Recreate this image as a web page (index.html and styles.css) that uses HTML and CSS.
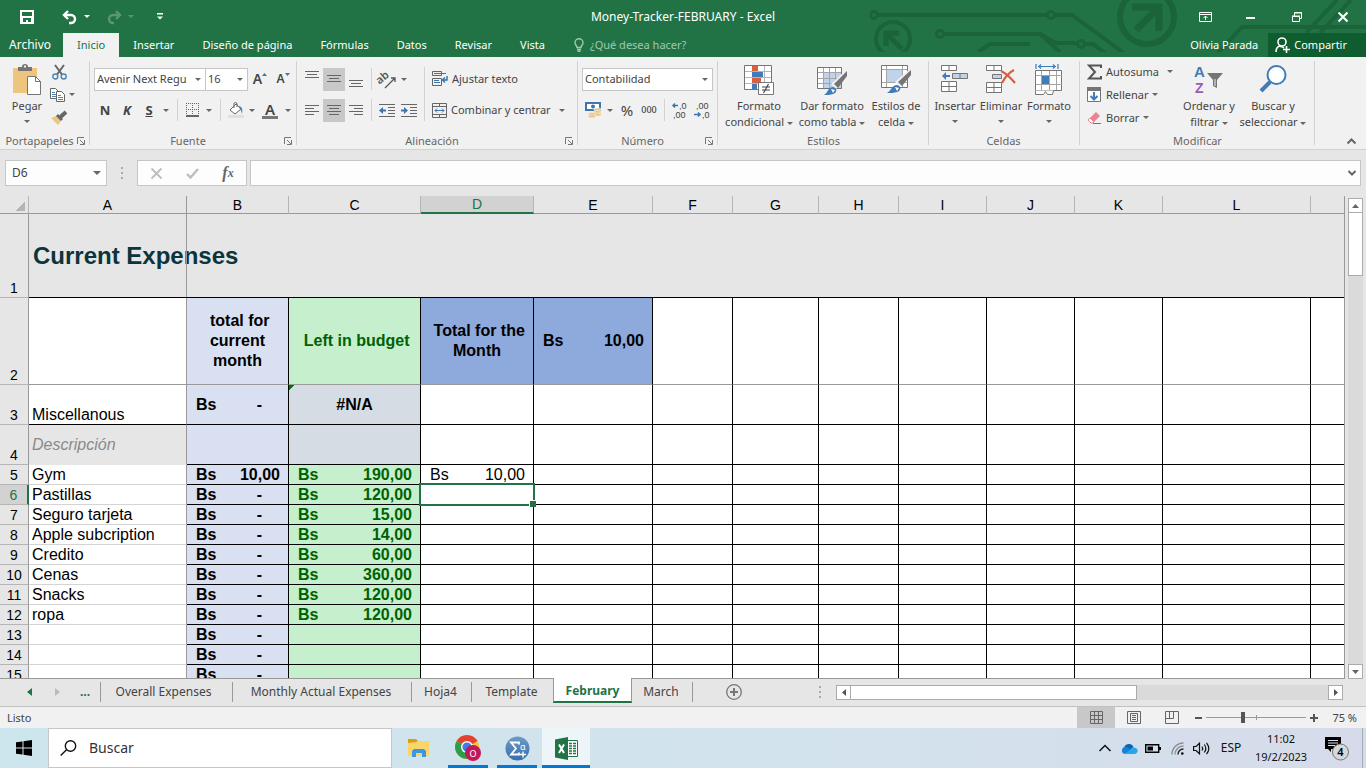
FILE: index.html
```html
<!DOCTYPE html>
<html lang="es">
<head>
<meta charset="utf-8">
<title>Money-Tracker-FEBRUARY - Excel</title>
<link rel="stylesheet" href="styles.css">
</head>
<body>
<header class="top">
  <svg class="circuit" width="496" height="52" viewBox="0 0 496 52" fill="none" stroke="#1b6339" stroke-width="4">
    <circle cx="4" cy="15" r="3.5" stroke-width="3"/><path d="M8 15H154"/>
    <circle cx="23" cy="39" r="17"/><path d="M16 46V33h13M17 34l15 15" stroke-width="5"/>
    <circle cx="70" cy="34" r="3.5" stroke-width="3"/><path d="M74 34H170l16 9h20"/>
    <path d="M108 52l12-8h40"/>
    <path d="M150 15h27M185 15h17l52 38"/><circle cx="181" cy="15" r="3.5" stroke-width="3"/>
    <circle cx="211" cy="44" r="3.5" stroke-width="3"/><path d="M215 44h8l12 9M170 34l20 18"/>
    <circle cx="277" cy="17" r="27" stroke-width="6"/><path d="M262 7h27v24M288 8l-22 22" stroke-width="7"/>
    <path d="M348 53l24-26h124M436 33l31-33M450 33l31-33" />
  </svg>
  <div class="titlebar">
    <div class="quick">
      <button class="ib q1" aria-label="Guardar"><svg width="14" height="14" viewBox="0 0 14 14"><path fill="#fff" fill-rule="evenodd" d="M0 0h14v14H0zM2 2v4h10V2zM3 8v4h3v-2h2v2h3V8z"/></svg></button>
      <button class="ib q2" aria-label="Deshacer"><svg width="16" height="14" viewBox="0 0 16 14" fill="none" stroke="#fff" stroke-width="2.4"><path d="M2 5h7a4 4 0 0 1 0 8H7"/><path d="M6 1L2 5l4 4"/></svg></button>
      <button class="ib q3" aria-label="Opciones de deshacer"><i class="tri w"></i></button>
      <button class="ib q2 dim" aria-label="Rehacer"><svg width="16" height="14" viewBox="0 0 16 14" fill="none" stroke="#fff" stroke-width="2.4"><path d="M14 5H7a4 4 0 0 0 0 8h1"/><path d="M10 1l4 4-4 4"/></svg></button>
      <button class="ib q3 dim" aria-label="Opciones de rehacer"><i class="tri w"></i></button>
      <button class="ib q4" aria-label="Personalizar barra"><svg width="6" height="7" viewBox="0 0 6 7" fill="#fff"><path d="M0 0h6v1.4H0zM0 3.4h6L3 6.6z"/></svg></button>
    </div>
    <h1 class="doc">Money-Tracker-FEBRUARY - Excel</h1>
    <div class="win">
      <button class="ib" aria-label="Opciones de presentación"><svg width="13" height="10" viewBox="0 0 13 10" fill="none" stroke="#fff"><path d="M.5.5h12v9H.5zM0 2.5h13M6.500 8V4M4.500 6l2-2 2 2"/></svg></button>
      <button class="ib" aria-label="Minimizar"><svg width="10" height="10" viewBox="0 0 10 10"><path fill="#fff" d="M0 5h9v2H0z"/></svg></button>
      <button class="ib" aria-label="Restaurar"><svg width="10" height="10" viewBox="0 0 10 10" fill="none" stroke="#fff"><path d="M.5 4.500h7v5h-7zM0 4h8M2.500 4V.5h7v6H8M2 1h8"/></svg></button>
      <button class="ib" aria-label="Cerrar"><svg width="10" height="10" viewBox="0 0 10 10" stroke="#fff" stroke-width="2"><path d="M.5.5l9 9M9.500.5l-9 9"/></svg></button>
    </div>
  </div>
  <nav class="menu">
    <button class="file">Archivo</button>
    <button class="on">Inicio</button>
    <button>Insertar</button>
    <button>Diseño de página</button>
    <button>Fórmulas</button>
    <button>Datos</button>
    <button>Revisar</button>
    <button>Vista</button>
    <button class="tell"><svg width="10" height="14" viewBox="0 0 10 14" fill="none" stroke="#a3c7b1" stroke-width="1.4"><path d="M3 9.500C3 7.500 1 7 1 4.700a4 4 0 0 1 8 0C9 7 7 7.500 7 9.500zM3 11.500h4M3.500 13.300h3"/></svg>¿Qué desea hacer?</button>
    <span class="user">Olivia Parada</span>
    <button class="share"><svg width="16" height="16" viewBox="0 0 16 16" fill="none" stroke="#fff" stroke-width="1.6"><circle cx="7" cy="5" r="4"/><path d="M1 15c0-4 2-6 5-6M5 9.500c2 0 3 .5 4 1.500M11.500 9v7M8 12.500h7"/></svg>Compartir</button>
  </nav>
</header>

<section class="ribbon">
  <div class="group g-clip">
    <div class="body">
      <button class="big paste"><svg width="30" height="32" viewBox="0 0 30 32"><path fill="#eec57e" d="M1 4h24v25H1z"/><path fill="#757575" d="M6 7V3h4a3 3 0 0 1 6 0h4v4z"/><path fill="#f1f1f1" d="M12 1.500h2v2h-2z"/><path fill="#fff" stroke="#757575" d="M15.500 12.500h8l5 5v13h-13z"/><path fill="none" stroke="#757575" d="M23.500 12.500v5h5"/></svg><span>Pegar</span><i class="tri"></i></button>
      <div class="stack">
        <button class="ib" aria-label="Cortar"><svg width="15" height="16" viewBox="0 0 15 16" fill="none"><path d="M3 1l7 9.500M12 1L5 10.500" stroke="#666" stroke-width="2"/><circle cx="3.300" cy="12.500" r="2.500" stroke="#4f82b5" stroke-width="1.400"/><circle cx="11.700" cy="12.500" r="2.500" stroke="#4f82b5" stroke-width="1.400"/></svg></button>
        <div class="row"><button class="ib" aria-label="Copiar"><svg width="16" height="14" viewBox="0 0 16 14"><path fill="#fff" stroke="#666" d="M.5.5h5l3 3v7h-8z"/><path stroke="#4f82b5" d="M2 4.500h3M2 6.500h4M2 8.500h4"/><path fill="#fff" stroke="#666" d="M6.500 3.500h5l3 3v7h-8z"/><path stroke="#4f82b5" d="M8 7.500h3M8 9.500h5M8 11.500h5"/></svg></button><button class="ib arr" aria-label="Opciones de copiar"><i class="tri"></i></button></div>
        <button class="ib" aria-label="Copiar formato"><svg width="16" height="14" viewBox="0 0 16 14"><path fill="#eec57e" d="M0 7l5-2 5 5-3 4z"/><path stroke="#666" stroke-width="3" d="M6 4l5 5M9 6l3-2"/><path stroke="#666" stroke-width="4" d="M10 5.500L15 1"/></svg></button>
      </div>
    </div>
    <div class="cap"><span>Portapapeles</span><button class="ib launch" aria-label="Más opciones de portapapeles"><svg width="8" height="8" viewBox="0 0 8 8" fill="none" stroke="#777"><path d="M.5 7V.5H7M3 3l4 4M7.500 3v4.500H3"/></svg></button></div>
  </div>

  <div class="group g-font">
    <div class="body rows">
      <div class="row">
        <span class="combo c-name"><select aria-label="Fuente"><option>Avenir Next Regu</option></select></span><span class="combo c-size"><select aria-label="Tamaño de fuente"><option>16</option></select></span>
        <button class="ib w24 up" aria-label="Aumentar tamaño"><b>A</b><svg width="5" height="3" viewBox="0 0 5 3"><path fill="#3d76ad" d="M0 3h5L2.500 0z"/></svg></button>
        <button class="ib w22 up sm" aria-label="Disminuir tamaño"><b>A</b><svg width="5" height="3" viewBox="0 0 5 3"><path fill="#3d76ad" d="M0 0h5L2.500 3z"/></svg></button>
      </div>
      <div class="row">
        <button class="ib w22 ft"><b>N</b></button><button class="ib w22 ft"><b><em>K</em></b></button><button class="ib w22 ft"><b><u>S</u></b></button><button class="ib arr" aria-label="Opciones de subrayado"><i class="tri"></i></button>
        <i class="sep"></i>
        <button class="ib w20" aria-label="Bordes"><svg width="14" height="14" viewBox="0 0 14 14" stroke="#666" fill="none"><path stroke-dasharray="1 1" d="M0 .5h14M0 6.500h14M.5 0v12M6.500 0v12M12.500 0v12"/><path stroke-width="2" d="M0 13h13"/></svg></button><button class="ib arr" aria-label="Opciones de bordes"><i class="tri"></i></button>
        <i class="sep"></i>
        <button class="ib w20" aria-label="Color de relleno"><svg width="16" height="16" viewBox="0 0 16 16" fill="none"><path fill="#fff" stroke="#666" d="M2 8l6-6 5 5-6 5z"/><path stroke="#666" d="M6 6V2a1.500 1.500 0 0 1 3 0v3"/><path fill="#4f82b5" d="M10 4c4 0 5 3 4 8-1-3-1-4-2-5z"/><path fill="#e0e0e0" d="M0 13h16v3H0z"/></svg></button><button class="ib arr" aria-label="Opciones de relleno"><i class="tri"></i></button>
        <button class="ib w24 fcolor" aria-label="Color de fuente"><b>A</b></button><button class="ib arr" aria-label="Opciones de color"><i class="tri"></i></button>
      </div>
    </div>
    <div class="cap"><span>Fuente</span><button class="ib launch" aria-label="Más opciones de fuente"><svg width="8" height="8" viewBox="0 0 8 8" fill="none" stroke="#777"><path d="M.5 7V.5H7M3 3l4 4M7.500 3v4.500H3"/></svg></button></div>
  </div>

  <div class="group g-align">
    <div class="body">
      <div class="rows">
        <div class="row">
          <button class="ib w22 top-al" aria-label="Alinear arriba"><svg width="14" height="16" viewBox="0 0 14 16" stroke="#666"><path d="M0 .5h14M2 3.500h10M0 6.500h14"/></svg></button><button class="ib w22 sel" aria-label="Alinear en el medio"><svg width="14" height="16" viewBox="0 0 14 16" stroke="#666"><path d="M0 4.500h14M2 7.500h10M0 10.500h14"/></svg></button><button class="ib w22" aria-label="Alinear abajo"><svg width="14" height="16" viewBox="0 0 14 16" stroke="#666"><path d="M0 9.500h14M2 12.500h10M0 15.500h14"/></svg></button>
          <i class="sep s4"></i>
          <button class="ib w22" aria-label="Orientación"><svg width="18" height="17" viewBox="0 0 18 17" fill="none" stroke="#555"><text x="-1" y="11" transform="rotate(-40 4 9)" fill="#555" stroke="none" font-size="11" font-weight="600">ab</text><path stroke-width="1.300" d="M7 17L17 7M13 7h4v4"/></svg></button><button class="ib arr" aria-label="Opciones de orientación"><i class="tri"></i></button>
        </div>
        <div class="row">
          <button class="ib w22" aria-label="Alinear a la izquierda"><svg width="14" height="11" viewBox="0 0 14 11" stroke="#666"><path d="M0 .5h14M0 3.500h9M0 6.500h14M0 9.500h9"/></svg></button><button class="ib w22 sel" aria-label="Centrar"><svg width="14" height="11" viewBox="0 0 14 11" stroke="#666"><path d="M0 .5h14M2 3.500h10M0 6.500h14M2 9.500h10"/></svg></button><button class="ib w22" aria-label="Alinear a la derecha"><svg width="14" height="11" viewBox="0 0 14 11" stroke="#666"><path d="M0 .5h14M5 3.500h9M0 6.500h14M5 9.500h9"/></svg></button>
          <i class="sep s4"></i>
          <button class="ib w22" aria-label="Disminuir sangría"><svg width="16" height="13" viewBox="0 0 16 13" fill="none" stroke="#666"><path d="M0 .5h16M9 3.500h7M9 6.500h7M9 9.500h7M0 12.500h16"/><path stroke="#3d76ad" stroke-width="2" d="M2 6.500h5"/><path fill="#3d76ad" stroke="none" d="M0 6.500L4 3v7z"/></svg></button><button class="ib w22" aria-label="Aumentar sangría"><svg width="16" height="13" viewBox="0 0 16 13" fill="none" stroke="#666"><path d="M0 .5h16M9 3.500h7M9 6.500h7M9 9.500h7M0 12.500h16"/><path stroke="#3d76ad" stroke-width="2" d="M0 6.500h5"/><path fill="#3d76ad" stroke="none" d="M7 6.500L3 3v7z"/></svg></button>
        </div>
      </div>
      <i class="sep tall"></i>
      <div class="rows">
        <div class="row"><button class="lab"><svg width="16" height="16" viewBox="0 0 16 16" fill="none" stroke="#666"><path d="M.5.5h9v4h-9zM.5 7.500h9v7h-9z"/><path stroke="#3d76ad" d="M2 2.500h12M2 9.500h5M2 11.500h6"/><path stroke="#3d76ad" stroke-width="1.500" d="M15 5v4h-4M13 6.500L10.500 9l2.500 2.500"/></svg>Ajustar texto</button></div>
        <div class="row"><button class="lab"><svg width="15" height="15" viewBox="0 0 15 15" fill="none" stroke="#666"><path d="M.5.5h14v14H.5zM.5 3.500h14M.5 11.500h14M7.500 0v3M7.500 12v3"/><path stroke="#3d76ad" d="M3 7.500h9M5 5.500l-2 2 2 2M10 5.500l2 2-2 2"/></svg>Combinar y centrar</button><button class="ib w22" aria-label="Opciones de combinar"><i class="tri"></i></button></div>
      </div>
    </div>
    <div class="cap"><span>Alineación</span><button class="ib launch" aria-label="Más opciones de alineación"><svg width="8" height="8" viewBox="0 0 8 8" fill="none" stroke="#777"><path d="M.5 7V.5H7M3 3l4 4M7.500 3v4.500H3"/></svg></button></div>
  </div>

  <div class="group g-num">
    <div class="body rows">
      <div class="row"><span class="combo c-num"><select aria-label="Formato de número"><option>Contabilidad</option></select></span></div>
      <div class="row">
        <button class="ib w22" aria-label="Formato de contabilidad"><svg width="17" height="16" viewBox="0 0 17 16"><path fill="#fff" stroke="#3d76ad" stroke-width="2" d="M1 1h14v7H1z"/><circle cx="8" cy="4.500" r="2" fill="#3d76ad"/><g fill="#eec57e" stroke="#f1f1f1" stroke-width=".6"><ellipse cx="12.500" cy="7.500" rx="3.800" ry="1.600"/><ellipse cx="12.500" cy="10" rx="3.800" ry="1.600"/><ellipse cx="12.500" cy="12.500" rx="3.800" ry="1.600"/><ellipse cx="7" cy="12" rx="3.800" ry="1.600"/><ellipse cx="7" cy="14.300" rx="3.800" ry="1.600"/></g></svg></button><button class="ib arr" aria-label="Opciones de moneda"><i class="tri"></i></button><button class="ib w22 pct">%</button><button class="ib w22 mil">000</button>
        <i class="sep s4"></i>
        <button class="ib w22 dec" aria-label="Aumentar decimales"><svg width="16" height="18" viewBox="0 0 16 18" fill="#444"><text class="lib" x="7" y="8" font-size="9">,0</text><text class="lib" x="1" y="17" font-size="9">,00</text><path stroke="#3d76ad" stroke-width="1.500" fill="none" d="M1 4.500h5M3 2.500l-2 2 2 2"/></svg></button><button class="ib w22 dec" aria-label="Disminuir decimales"><svg width="16" height="18" viewBox="0 0 16 18" fill="#444"><text class="lib" x="2" y="8" font-size="9">,00</text><text class="lib" x="8" y="17" font-size="9">,0</text><path stroke="#3d76ad" stroke-width="1.500" fill="none" d="M0 13.500h6M4 11.500l2 2-2 2"/></svg></button>
      </div>
    </div>
    <div class="cap"><span>Número</span><button class="ib launch" aria-label="Más opciones de número"><svg width="8" height="8" viewBox="0 0 8 8" fill="none" stroke="#777"><path d="M.5 7V.5H7M3 3l4 4M7.500 3v4.500H3"/></svg></button></div>
  </div>

  <div class="group g-style">
    <div class="body">
      <button class="big b74"><svg width="30" height="32" viewBox="0 0 30 32"><path fill="#fff" d="M.5 1.500h27v24H.5z"/><path fill="none" stroke="#b5b5b5" d="M8.500 2v23M20.500 2v23M1 7.500h26M1 13.500h26M1 19.500h26"/><path fill="none" stroke="#757575" d="M.5 1.500h27v24H.5z"/><path fill="#d8603f" d="M8 2h6v5H8zM8 14h9v5H8z"/><path fill="#3f7cb8" d="M8 8h11v5H8zM8 20h5v5H8z"/><path fill="#fff" stroke="#757575" d="M14.500 18.500h15v12h-15z"/><path stroke="#444" stroke-width="1.200" d="M18 23h8M18 26h8M24.500 20l-5 9"/></svg><span>Formato</span><span>condicional <i class="tri"></i></span></button>
      <button class="big b72"><svg width="30" height="32" viewBox="0 0 30 32"><path fill="#fff" d="M.5 3.500h24v21H.5z"/><path fill="#bfd3ea" d="M7 9h18v16H7z"/><path fill="none" stroke="#a5a5a5" d="M6.500 4v20M12.500 4v20M18.500 4v20M1 8.500h23M1 14.500h23M1 19.500h23"/><path fill="none" stroke="#757575" d="M.5 3.500h24v21H.5z"/><path fill="#f1f1f1" d="M30 5L14 20l5 5 11-13z"/><path fill="#757575" d="M30 7L17 20l4 4 9-12z"/><path fill="#3f7cb8" d="M7 31c4-2 4-8 9-8 5 1 4 6 0 7-3 1-5 1-9 1z"/><path fill="#fff" d="M14 25l4 1-2 3z"/></svg><span>Dar formato</span><span>como tabla <i class="tri"></i></span></button>
      <button class="big b56"><svg width="30" height="32" viewBox="0 0 30 32"><path fill="#fff" stroke="#757575" d="M.5 1.500h26v22H.5z"/><path fill="none" stroke="#a5a5a5" d="M5.500 2v21M21.500 2v21M1 5.500h25M1 18.500h25"/><path fill="#bfd3ea" d="M6 6h15v12H6z"/><path fill="#f1f1f1" d="M30 4L14 18l5 5 11-12z"/><path fill="#757575" d="M30 6L17 18l4 4 9-11z"/><path fill="#3f7cb8" d="M6 29c4-2 5-8 10-8 5 1 4 6 0 7-3 1-6 1-10 1z"/><path fill="#fff" d="M14 23l4 1-2 3z"/></svg><span>Estilos de</span><span>celda <i class="tri"></i></span></button>
    </div>
    <div class="cap"><span>Estilos</span></div>
  </div>

  <div class="group g-cell">
    <div class="body">
      <button class="big b48"><svg width="28" height="32" viewBox="0 0 28 32" fill="#fff" stroke="#757575"><path d="M.5 1.500h15v5H.5zM8 2v5M.5 17.500h15v10H.5zM8 18v10M1 22.500h14"/><path fill="#bfd3ea" d="M11.500 9.500h15v5h-15zM19 10v5"/><path fill="#3f7cb8" stroke="none" d="M1 12l4-4v3h4v2H5v3z"/></svg><span>Insertar</span><i class="tri"></i></button>
      <button class="big b44"><svg width="30" height="32" viewBox="0 0 30 32" fill="#fff" stroke="#757575"><path d="M.5 1.500h15v5H.5zM8 2v5M.5 18.500h15v10H.5zM8 19v10M1 23.500h14"/><path fill="#bfd3ea" d="M6.500 10.500h9v4h-9z"/><path fill="none" stroke="#d8603f" stroke-width="2.200" d="M15 7c4 2 9 6 14 12M28 6c-6 3-9 7-12 13"/></svg><span>Eliminar</span><i class="tri"></i></button>
      <button class="big b52"><svg width="28" height="32" viewBox="0 0 28 32" fill="none"><path fill="#fff" stroke="#757575" d="M.5 6.500h26v20H.5z"/><path stroke="#a5a5a5" d="M6.500 7v19M14.500 7v19M21.500 7v19M1 11.500h26M1 20.500h26"/><path fill="#3f7cb8" d="M7 12h7v8H7z"/><path stroke="#3f7cb8" stroke-width="1.200" d="M1 0v5M23 0v5M3 2.500h18M6 .5l-2 2 2 2M18 .5l2 2-2 2"/><path fill="#fff" stroke="#757575" d="M.5 26.500v4h8l2-3 2 3h5l1-4"/></svg><span>Formato</span><i class="tri"></i></button>
    </div>
    <div class="cap"><span>Celdas</span></div>
  </div>

  <div class="group g-edit">
    <div class="body">
      <div class="stack2">
        <div class="row"><button class="lab"><svg width="15" height="16" viewBox="0 0 15 16"><path fill="none" stroke="#555" stroke-width="2" d="M14 4V1.500H2L8 8l-6 6.500h12V12"/></svg>Autosuma</button><button class="ib w22" aria-label="Opciones de autosuma"><i class="tri"></i></button></div>
        <div class="row"><button class="lab"><svg width="15" height="15" viewBox="0 0 15 15"><path fill="#fff" stroke="#757575" d="M.5.5h13v14H.5z"/><path fill="#757575" d="M0 0h14v4H0z"/><path fill="none" stroke="#3f7cb8" stroke-width="2" d="M7 5v7M3.500 9L7 12.500 10.500 9"/></svg>Rellenar<i class="tri"></i></button></div>
        <div class="row"><button class="lab"><svg width="15" height="14" viewBox="0 0 15 14"><path fill="#e88496" d="M3 7l6-6 4 4-6 6z"/><path fill="#fff" stroke="#e88496" d="M1 9l2-2 4 4-1 1H4z"/><path stroke="#757575" d="M6 12.500h8"/></svg>Borrar<i class="tri"></i></button></div>
      </div>
      <button class="big b60"><svg width="30" height="32" viewBox="0 0 30 32"><text class="lib" x="0" y="13" font-size="15" font-weight="700" fill="#3f7cb8">A</text><text class="lib" x="1" y="29" font-size="14" font-weight="700" fill="#9a5bb5">Z</text><path fill="#757575" d="M13 9h16l-6 7v8l-4-2v-6z"/><path stroke="#f1f1f1" d="M21 15v7"/></svg><span>Ordenar y</span><span>filtrar <i class="tri"></i></span></button>
      <button class="big b68"><svg width="28" height="32" viewBox="0 0 28 32"><circle cx="17.500" cy="11" r="9" fill="#fff" stroke="#3f7cb8" stroke-width="2"/><path stroke="#3f7cb8" stroke-width="4" d="M11 18l-9 9"/></svg><span>Buscar y</span><span>seleccionar <i class="tri"></i></span></button>
    </div>
    <div class="cap"><span>Modificar</span></div>
  </div>
  <button class="ib collapse" aria-label="Contraer la cinta"><svg width="9" height="6" viewBox="0 0 9 6" fill="none" stroke="#666" stroke-width="2"><path d="M.5 5.500l4-4 4 4"/></svg></button>
</section>

<section class="fbar">
  <span class="namebox"><input aria-label="Cuadro de nombres" value="D6"><i class="tri big-t"></i></span>
  <i class="dots"></i>
  <div class="fbtns">
    <button class="ib" aria-label="Cancelar"><svg width="11" height="11" viewBox="0 0 11 11" stroke="#bdbdbd" stroke-width="1.800"><path d="M.5.5l10 10M10.500.5l-10 10"/></svg></button>
    <button class="ib" aria-label="Introducir"><svg width="13" height="11" viewBox="0 0 13 11" fill="none" stroke="#bdbdbd" stroke-width="2.400"><path d="M1 6l3.500 3.500L12 1"/></svg></button>
    <button class="ib fx" aria-label="Insertar función"><em>f</em><em class="x">x</em></button>
  </div>
  <div class="formula"><input aria-label="Barra de fórmulas"><svg width="8" height="6" viewBox="0 0 8 6" fill="none" stroke="#666" stroke-width="2"><path d="M.5 1L4 4.500 7.500 1"/></svg></div>
</section>

<main class="sheet">
  <div class="view">
  <table>
    <colgroup><col class="k0"><col class="k1"><col class="k2"><col class="k3"><col class="k4"><col class="k5"><col class="k6"><col class="k7"><col class="k6"><col class="k8"><col class="k8"><col class="k8"><col class="k9"><col></colgroup>
    <thead><tr><th class="corner"></th><th class="fz">A</th><th>B</th><th>C</th><th class="sel">D</th><th>E</th><th>F</th><th>G</th><th>H</th><th>I</th><th>J</th><th>K</th><th>L</th><th></th></tr></thead>
    <tbody>
    <tr class="r1"><th>1</th><td class="fz title"><span>Current Expenses</span></td><td></td><td></td><td></td><td></td><td></td><td></td><td></td><td></td><td></td><td></td><td></td><td></td></tr>
    <tr class="r2"><th>2</th><td class="fz"></td><td class="lav hd">&nbsp;total for<br>current<br>month</td><td class="grn hd">&nbsp;Left in budget</td><td class="blu hd">&nbsp;Total for the<br>Month</td><td class="blu"><div class="acc"><span>Bs</span><span>10,00</span></div></td><td></td><td></td><td></td><td></td><td></td><td></td><td></td><td></td></tr>
    <tr class="r3"><th>3</th><td class="fz">Miscellanous</td><td class="lav"><div class="acc dash"><span>Bs</span><span>-</span></div></td><td class="gry hd err">#N/A</td><td></td><td></td><td></td><td></td><td></td><td></td><td></td><td></td><td></td><td></td></tr>
    <tr class="r4"><th>4</th><td class="fz desc">Descripción</td><td class="lav"></td><td class="gry"></td><td></td><td></td><td></td><td></td><td></td><td></td><td></td><td></td><td></td><td></td></tr>
    <tr><th>5</th><td class="fz">Gym</td><td class="lav"><div class="acc"><span>Bs</span><span>10,00</span></div></td><td class="grn"><div class="acc"><span>Bs</span><span>190,00</span></div></td><td><div class="acc reg"><span>Bs</span><span>10,00</span></div></td><td></td><td></td><td></td><td></td><td></td><td></td><td></td><td></td><td></td></tr>
    <tr><th class="sel">6</th><td class="fz">Pastillas</td><td class="lav"><div class="acc dash"><span>Bs</span><span>-</span></div></td><td class="grn"><div class="acc"><span>Bs</span><span>120,00</span></div></td><td class="cursor"></td><td></td><td></td><td></td><td></td><td></td><td></td><td></td><td></td><td></td></tr>
    <tr><th>7</th><td class="fz">Seguro tarjeta</td><td class="lav"><div class="acc dash"><span>Bs</span><span>-</span></div></td><td class="grn"><div class="acc"><span>Bs</span><span>15,00</span></div></td><td></td><td></td><td></td><td></td><td></td><td></td><td></td><td></td><td></td><td></td></tr>
    <tr><th>8</th><td class="fz">Apple subcription</td><td class="lav"><div class="acc dash"><span>Bs</span><span>-</span></div></td><td class="grn"><div class="acc"><span>Bs</span><span>14,00</span></div></td><td></td><td></td><td></td><td></td><td></td><td></td><td></td><td></td><td></td><td></td></tr>
    <tr><th>9</th><td class="fz">Credito</td><td class="lav"><div class="acc dash"><span>Bs</span><span>-</span></div></td><td class="grn"><div class="acc"><span>Bs</span><span>60,00</span></div></td><td></td><td></td><td></td><td></td><td></td><td></td><td></td><td></td><td></td><td></td></tr>
    <tr><th>10</th><td class="fz">Cenas</td><td class="lav"><div class="acc dash"><span>Bs</span><span>-</span></div></td><td class="grn"><div class="acc"><span>Bs</span><span>360,00</span></div></td><td></td><td></td><td></td><td></td><td></td><td></td><td></td><td></td><td></td><td></td></tr>
    <tr><th>11</th><td class="fz">Snacks</td><td class="lav"><div class="acc dash"><span>Bs</span><span>-</span></div></td><td class="grn"><div class="acc"><span>Bs</span><span>120,00</span></div></td><td></td><td></td><td></td><td></td><td></td><td></td><td></td><td></td><td></td><td></td></tr>
    <tr><th>12</th><td class="fz">ropa</td><td class="lav"><div class="acc dash"><span>Bs</span><span>-</span></div></td><td class="grn"><div class="acc"><span>Bs</span><span>120,00</span></div></td><td></td><td></td><td></td><td></td><td></td><td></td><td></td><td></td><td></td><td></td></tr>
    <tr><th>13</th><td class="fz"></td><td class="lav"><div class="acc dash"><span>Bs</span><span>-</span></div></td><td class="grn"></td><td></td><td></td><td></td><td></td><td></td><td></td><td></td><td></td><td></td><td></td></tr>
    <tr><th>14</th><td class="fz"></td><td class="lav"><div class="acc dash"><span>Bs</span><span>-</span></div></td><td class="grn"></td><td></td><td></td><td></td><td></td><td></td><td></td><td></td><td></td><td></td><td></td></tr>
    <tr><th>15</th><td class="fz"></td><td class="lav"><div class="acc dash"><span>Bs</span><span>-</span></div></td><td class="grn"></td><td></td><td></td><td></td><td></td><td></td><td></td><td></td><td></td><td></td><td></td></tr>
    </tbody>
  </table>
  </div>
  <div class="vscroll"><button class="sb" aria-label="Subir"><svg width="7" height="4" viewBox="0 0 7 4"><path fill="#666" d="M0 4h7L3.500 0z"/></svg></button><div class="vthumb"></div><div class="track"></div><button class="sb" aria-label="Bajar"><svg width="7" height="4" viewBox="0 0 7 4"><path fill="#666" d="M0 0h7L3.500 4z"/></svg></button></div>
</main>

<section class="tabs">
  <div class="tnav"><button class="ib" aria-label="Hoja anterior"><svg width="5" height="8" viewBox="0 0 5 8"><path fill="#217346" d="M5 0v8L0 4z"/></svg></button><button class="ib" aria-label="Hoja siguiente"><svg width="5" height="8" viewBox="0 0 5 8"><path fill="#bbb" d="M0 0v8l5-4z"/></svg></button><button class="ib more">...</button></div>
  <button class="tab t1">Overall Expenses</button>
  <button class="tab t2">Monthly Actual Expenses</button>
  <button class="tab t3">Hoja4</button>
  <button class="tab t4">Template</button>
  <button class="tab t5 active">February</button>
  <button class="tab t6">March</button>
  <button class="ib add" aria-label="Hoja nueva"><svg width="16" height="16" viewBox="0 0 16 16" fill="none" stroke="#777"><circle cx="8" cy="8" r="7.300" stroke-width="1.300"/><path stroke-width="2" d="M4 8h8M8 4v8"/></svg></button>
  <i class="dots"></i>
  <div class="hscroll"><button class="sb" aria-label="Izquierda"><svg width="4" height="7" viewBox="0 0 4 7"><path fill="#555" d="M4 0v7L0 3.500z"/></svg></button><div class="hthumb"></div><div class="track"></div><button class="sb" aria-label="Derecha"><svg width="4" height="7" viewBox="0 0 4 7"><path fill="#555" d="M0 0v7l4-3.500z"/></svg></button></div>
</section>

<footer class="status">
  <span class="ready">Listo</span>
  <button class="ib v on" aria-label="Normal"><svg width="13" height="13" viewBox="0 0 13 13" fill="none" stroke="#666"><path d="M.5.5h12v12H.5zM4.500 0v13M8.500 0v13M0 4.500h13M0 8.500h13"/></svg></button>
  <button class="ib v" aria-label="Diseño de página"><svg width="14" height="13" viewBox="0 0 14 13" fill="none" stroke="#666"><path d="M.5.5h13v12H.5zM3.500 2.500h7v8h-7zM5 4.500h4M5 6.500h4M5 8.500h4"/></svg></button>
  <button class="ib v" aria-label="Salto de página"><svg width="14" height="13" viewBox="0 0 14 13" fill="none" stroke="#666"><path d="M.5.5h13v12H.5zM.5 7.500h8V.5M4.500.5v7"/></svg></button>
  <button class="ib zb" aria-label="Alejar"><svg width="7" height="7" viewBox="0 0 7 7"><path fill="#555" d="M0 3h7v2H0z"/></svg></button>
  <input class="zoom" type="range" min="10" max="160" value="65" aria-label="Zoom">
  <button class="ib zb" aria-label="Acercar"><svg width="8" height="8" viewBox="0 0 8 8"><path fill="#555" d="M0 3h8v2H0zM3 0h2v8H3z"/></svg></button>
  <span class="pc">75 %</span>
</footer>

<footer class="taskbar">
  <button class="ib start" aria-label="Inicio"><svg width="16" height="16" viewBox="0 0 16 16"><path d="M0 2.300L6.500 1.400v6.100H0zM7.500 1.200L16 0v7.500H7.500zM0 8.500h6.500v6.100L0 13.700zM7.500 8.500H16V16l-8.500-1.200z"/></svg></button>
  <label class="search"><svg width="17" height="16" viewBox="0 0 17 16" fill="none" stroke="#111" stroke-width="1.400"><circle cx="10.500" cy="6" r="5.200"/><path d="M6.500 9.700L.7 15.500"/></svg><input type="text" placeholder="Buscar" aria-label="Buscar"></label>
  <button class="ib app gap" aria-label="Explorador"><svg width="22" height="18" viewBox="0 0 22 18"><path fill="#dd9c12" d="M0 0h8l2 2v4H0z"/><path fill="#fcd56a" d="M0 4l8-1 2-1h11v15H0z"/><path fill="#3a97dd" d="M4 18v-6l2-2h10l2 2v6h-4v-4H8v4z"/></svg></button>
  <button class="ib app run" aria-label="Chrome"><svg width="26" height="26" viewBox="0 0 26 26"><circle cx="12" cy="12" r="12" fill="#fbc42d"/><path fill="#e24133" d="M12 12L1.600 6A12 12 0 0 1 22.400 6z"/><path fill="#2b9f49" d="M12 12L1.600 6a12 12 0 0 0 10 18l5-9z"/><path fill="#e24133" d="M12 6h10.400l-1-1.500L12 3z"/><circle cx="12" cy="12" r="6" fill="#fff"/><circle cx="12" cy="12" r="4.600" fill="#3e7de8"/><circle cx="18" cy="18" r="8" fill="#c2185b"/><text x="18" y="21.500" text-anchor="middle" font-size="9" fill="#fff">O</text></svg></button>
  <button class="ib app run" aria-label="Símbolos"><svg width="25" height="25" viewBox="0 0 25 25"><defs><linearGradient id="sg" x1="0" y1="0" x2="0" y2="1"><stop offset="0" stop-color="#6d9bc9"/><stop offset="1" stop-color="#386fab"/></linearGradient></defs><circle cx="12.500" cy="12.500" r="12" fill="url(#sg)"/><path fill="none" stroke="#fff" stroke-width="1.800" d="M14 8.500V6.500H6l5 6-5 6h8v-2"/><text x="15" y="14" font-size="9" fill="#fff">α</text><path stroke="#fff" stroke-width="1.400" d="M15 18.500h6M18 15.500v6"/></svg></button>
  <button class="ib app run act" aria-label="Excel"><svg width="23" height="23" viewBox="0 0 23 23"><path fill="#fff" stroke="#217346" d="M12 3.500h10.500v16H12z"/><path stroke="#217346" stroke-width="1.600" stroke-dasharray="3 1" d="M14 6.500h8M14 9h8M14 11.500h8M14 14h8M14 16.500h8"/><path fill="#217346" d="M0 2.500L13 0v23L0 20.500z"/><path stroke="#fff" stroke-width="2" d="M4 7.500l5 8.500M9 7.500L4 16"/></svg></button>
  <div class="tray">
    <button class="ib t24" aria-label="Iconos ocultos"><svg width="12" height="8" viewBox="0 0 12 8" fill="none" stroke="#111" stroke-width="1.500"><path d="M.5 7L6 1.500 11.500 7"/></svg></button>
    <button class="ib t24" aria-label="OneDrive"><svg width="17" height="11" viewBox="0 0 17 11"><path fill="#0a64b4" d="M3 5a5 5 0 0 1 9.500-1L8 8z"/><path fill="#1183d8" d="M4 11a3.500 3.500 0 1 1 1-7c3 0 5 3 8 7z"/><path fill="#2aa4ea" d="M3 11l7-4.500a4 4 0 0 1 5-1.500 3.200 3.200 0 0 1-1 6z"/></svg></button>
    <button class="ib t24" aria-label="Batería"><svg width="16" height="9" viewBox="0 0 16 9"><path fill="none" stroke="#000" stroke-width="1.400" d="M.7.7h13v7.600H.7z"/><path d="M2.500 2.500H8v4H2.500zM14 3h2v3h-2z"/></svg></button>
    <button class="ib t24" aria-label="Red"><svg width="13" height="13" viewBox="0 0 13 13" fill="none" stroke="#8a8f96" stroke-width="1.400"><path d="M1 12.500A11.500 11.500 0 0 1 12.500 1M4 12.500a8.500 8.500 0 0 1 8.500-8.500"/><path stroke="#222" d="M7 12.500A5.500 5.500 0 0 1 12.500 7"/><circle cx="11.300" cy="11.500" r="1.300" fill="#000" stroke="none"/></svg></button>
    <button class="ib t24" aria-label="Volumen"><svg width="17" height="13" viewBox="0 0 17 13" fill="none" stroke="#111" stroke-width="1.200"><path d="M.6 4.500h2.500L6.500 1.200v10.600L3.100 8.500H.6zM9 4.500q1.500 2 0 4M11.300 2.500q3 4 0 8M13.500.8q4.500 5.700 0 11.400"/></svg></button>
    <button class="ib esp">ESP</button>
    <div class="clock"><span>11:02</span><span>19/2/2023</span></div>
    <button class="ib note" aria-label="Notificaciones, 4"><svg width="25" height="25" viewBox="0 0 25 25"><path d="M0 1h16v12H6v3l-3-3H0z"/><path stroke="#d5dbe8" stroke-width="1.200" d="M3 4.500h10M3 7h10M3 9.500h7"/><circle cx="15.500" cy="16" r="8" fill="#d3d7de" stroke="#777"/><text x="15.500" y="20" text-anchor="middle" font-size="11" font-weight="600">4</text></svg></button>
  </div>
</footer>
</body>
</html>
```
FILE: styles.css
```css
* { box-sizing: border-box; }
html, body { height: 100%; }
body {
  margin: 0;
  display: flex;
  flex-direction: column;
  overflow: hidden;
  background: #e6e6e6;
  color: #444;
  font: 12px/16px "Noto Sans", "Open Sans", sans-serif;
}
button, input, select { font: inherit; color: inherit; margin: 0; padding: 0; border: 0; background: none; border-radius: 0; outline: 0; }
button { white-space: nowrap; }
svg { display: block; flex: none; overflow: visible; }
svg text { font-family: "Noto Sans", sans-serif; }
svg .lib { font-family: "Liberation Sans", sans-serif; }
i { font-style: normal; }
.ib { display: flex; align-items: center; justify-content: center; flex: none; }
.row { display: flex; align-items: center; }
.tri { display: inline-block; flex: none; border: 3px solid transparent; border-top-color: #666; border-bottom: 0; vertical-align: middle; }
.tri.w { border-top-color: #fff; }
.dim { opacity: .25; }

/* title and tabs */
.top { position: relative; background: #217346; color: #fff; flex: none; overflow: hidden; }
.circuit { position: absolute; right: 0; top: 0; overflow: hidden; }
.titlebar, .menu { position: relative; display: flex; }
.titlebar { height: 33px; align-items: center; }
.quick { display: flex; flex: 1; align-items: center; height: 28px; }
.q1 { width: 22px; margin-left: 16px; margin-right: 21px; }
.q2 { width: 22px; }
.q3 { width: 12px; margin-right: 10px; }
.q4 { width: 12px; margin-left: 7px; }
.doc { margin: 0; font-size: 12px; font-weight: 400; }
.win { display: flex; flex: 1; justify-content: flex-end; height: 30px; }
.win .ib { width: 46px; }
.menu { height: 24px; align-items: stretch; font-size: 11px; }
.menu button { padding: 0 14px; }
.menu .file { padding: 0 12px 0 9px; font-size: 12px; }
.menu .on { background: #f1f1f1; color: #217346; }
.menu .tell { display: flex; align-items: center; gap: 6px; color: #a3c7b1; padding-left: 15px; }
.user { margin-left: auto; padding: 4px 10px 0 0; }
.menu .share { display: flex; align-items: center; gap: 3px; background: #0f5c2e; padding: 0 19px 0 7px; }

/* ribbon */
.ribbon { display: flex; flex: none; height: 93px; background: #f1f1f1; border-bottom: 1px solid #d2d2d2; font-size: 11px; }
.group { display: flex; flex-direction: column; flex: none; position: relative; padding: 3px 4px 0; }
.group::after { content: ""; position: absolute; right: 0; top: 4px; bottom: 4px; width: 1px; background: #d2d2d2; }
.g-clip { width: 90px; }
.g-font { width: 207px; }
.g-align { width: 281px; }
.g-num { width: 140px; }
.g-style { width: 211px; }
.g-cell { width: 151px; padding-left: 2px; }
.g-edit { width: 235px; }
.body { display: flex; height: 73px; }
.rows { display: flex; flex-direction: column; gap: 7px; padding-top: 7px; }
.rows .row { height: 24px; }
.cap { display: flex; align-items: center; height: 16px; color: #666; }
.g-clip, .g-font, .g-align, .g-num { padding-right: 3px; }
.cap span { flex: 1; text-align: center; }
.launch { width: 12px; }
.big { display: flex; flex-direction: column; align-items: center; padding-top: 4px; }
.big svg { margin-bottom: 2px; }
.big > .tri { margin-top: 6px; }
.paste { width: 46px; }
.b74 { width: 74px; }
.b72 { width: 72px; }
.b56 { width: 56px; }
.b48 { width: 48px; }
.b44 { width: 44px; }
.b52 { width: 52px; }
.b60 { width: 60px; }
.b68 { width: 68px; }
.stack, .stack2 { display: flex; flex-direction: column; }
.stack > * { height: 23px; width: 18px; }
.stack .row { width: 32px; }
.stack2 { width: 95px; padding-left: 3px; }
.stack2 .row { height: 23px; }
.arr { width: 12px; }
.w20 { width: 20px; }
.w22 { width: 22px; }
.w24 { width: 24px; }
.row > .ib { height: 23px; }
.sel { background: #c8c8c8; }
.sep { width: 1px; height: 22px; background: #d2d2d2; margin: 0 5px; }
.sep.s4 { margin: 0 4px; }
.sep.tall { height: 54px; margin: 7px 7px 0 4px; }
.combo { position: relative; display: block; height: 23px; background: #fff; border: 1px solid #c6c6c6; }
.combo select { width: 100%; height: 21px; padding-left: 2px; appearance: none; }
.combo::after { content: ""; position: absolute; right: 4px; top: 9px; border: 3px solid transparent; border-top-color: #666; border-bottom: 0; pointer-events: none; }
.c-name { width: 112px; margin-right: -1px; }
.c-size { width: 43px; }
.c-num { width: 131px; }
.up b { font-size: 14px; font-weight: 600; }
.up svg { margin: 0 0 10px; }
.up.sm b { font-size: 12px; }
.ft { font-size: 13px; }
.fcolor b { font-size: 15px; line-height: 14px; padding: 0 3px; border-bottom: 3px solid #777; font-weight: 600; }
.lab { display: flex; align-items: center; gap: 4px; }
.pct { font-size: 15px; }
.mil { font-size: 9px; font-weight: 500; }
.collapse { margin: auto 8px 5px auto; width: 14px; }

/* formula bar */
.fbar { display: flex; flex: none; align-items: center; height: 46px; padding: 0 5px; }
.namebox, .fbtns, .formula { display: flex; align-items: center; height: 26px; background: #fdfdfd; border: 1px solid #c6c6c6; }
.namebox { width: 102px; padding: 0 5px 0 6px; }
.namebox input { flex: 1; min-width: 0; }
.big-t { border-width: 4px 4px 0; }
.dots { width: 2px; height: 12px; margin: 0 14px; background: repeating-linear-gradient(#aaa 0 2px, transparent 2px 5px); }
.fbtns { width: 110px; }
.fbtns .ib { width: 36px; height: 24px; }
.fx { font: 16px/20px "Liberation Serif", serif; font-weight: 700; color: #666; }
.fx .x { font-size: 12px; }
.formula { flex: 1; margin-left: 3px; padding-right: 4px; }
.formula input { flex: 1; }

/* grid */
.sheet { display: flex; flex: 1; min-height: 0; }
.view { flex: 1; overflow: hidden; border-right: 1px solid #999; border-bottom: 1px solid #999; }
table { width: 100%; table-layout: fixed; border-collapse: separate; border-spacing: 0; font: 16px/18px "Liberation Sans", Arial, sans-serif; color: #000; }
.k0 { width: 29px; } .k1 { width: 158px; } .k2 { width: 102px; } .k3 { width: 132px; } .k4 { width: 113px; }
.k5 { width: 119px; } .k6 { width: 80px; } .k7 { width: 86px; } .k8 { width: 88px; } .k9 { width: 148px; }
th { padding: 0; font-size: 14px; line-height: 16px; font-weight: 400; vertical-align: bottom; background: #e6e6e6; border-right: 1px solid #999; border-bottom: 1px solid #b5b5b5; }
tbody th { padding-bottom: 1px; }
thead th { height: 18px; border-bottom-color: #999; border-right-color: #b5b5b5; }
thead th:last-child { border-right: 0; }
thead .fz { border-right-color: #999; }
th.sel { background: #d2d2d2; color: #217346; border-right: 2px solid #217346; }
thead th.sel { border-right: 1px solid #b5b5b5; border-bottom: 2px solid #217346; line-height: 15px; }
.corner { background: linear-gradient(135deg, transparent 50%, #b5b5b5 50%) 15px 5px / 10px 10px no-repeat #e6e6e6; }
td { height: 20px; padding: 0; background: #fff; border-right: 1px solid #000; border-bottom: 1px solid #000; }
td:last-child { border-right: 0; }
td.fz { padding-left: 3px; border-right-color: #999; border-bottom-color: #d4d4d4; }
.r1 td { height: 84px; background: #e6e6e6; border-right: 0; }
.r2 td { height: 87px; border-bottom-color: #999; }
.r3 td, .r4 td { height: 40px; }
.r1 .fz, .r3 .fz { border-bottom-color: #000; }
.r2 .fz { border-bottom-color: #999; }
.r3 .fz { vertical-align: bottom; }
.title { position: relative; font-size: 24px; line-height: 30px; font-weight: 700; color: #0c343d; white-space: nowrap; }
.title span { position: relative; z-index: 1; padding-left: 1px; }
.title::after { content: ""; position: absolute; z-index: 2; top: 0; bottom: 0; right: 0; width: 1px; background: #999; }
td.desc { background: #e6e6e6; color: #8a8a8a; font-style: italic; border-bottom-color: #e6e6e6; }
.lav { background: #d9e0f2; }
.grn { background: #c6efce; color: #006100; }
.gry { background: #d6dce4; }
.blu { background: #8ea9db; }
.hd { font-weight: 700; line-height: 20px; text-align: center; }
.acc { display: flex; justify-content: space-between; font-weight: 700; padding: 0 8px 0 9px; }
.dash { padding-right: 26px; }
.reg { font-weight: 400; }
.err { background: linear-gradient(135deg, #007a00 50%, transparent 50%) 0 0 / 6px 6px no-repeat #d6dce4; }
.cursor { position: relative; }
.cursor::before { content: ""; position: absolute; inset: -2px; border: 2px solid #217346; z-index: 1; }
.cursor::after { content: ""; position: absolute; right: -3px; bottom: -3px; width: 6px; height: 6px; background: #217346; border: 1px solid #fff; border-width: 1px 0 0 1px; z-index: 2; }

/* scroll bars */
.vscroll { display: flex; flex-direction: column; width: 21px; padding: 2px 3px 0; }
.sb { display: flex; align-items: center; justify-content: center; width: 15px; height: 15px; background: #fff; border: 1px solid #ababab; flex: none; }
.vthumb { height: 64px; margin-top: -1px; background: #fff; border: 1px solid #ababab; }
.track { flex: 1; background: #dadada; }
.hscroll { display: flex; width: 507px; margin-right: 23px; }
.hthumb { width: 287px; height: 15px; margin-left: -1px; background: #fff; border: 1px solid #ababab; }

/* sheet tabs */
.tabs { display: flex; flex: none; align-items: center; height: 28px; padding-bottom: 1px; border-bottom: 1px solid #c0c0c0; }
.tnav { display: flex; width: 101px; height: 20px; padding-left: 15px; border-right: 1px solid #999; }
.tnav .ib { width: 28px; }
.tnav .more { font-weight: 700; color: #217346; }
.tab { height: 20px; border-right: 1px solid #999; padding: 0 2px 0 0; }
.t1 { width: 132px; padding-right: 6px; } .t2 { width: 179px; } .t3 { width: 60px; } .t4 { width: 81px; border-right: 0; }
.t5 { width: 79px; } .t6 { width: 61px; }
.tab.active { align-self: flex-start; height: 25px; margin-top: -1px; padding: 2px 0 0; background: #fff; color: #217346; font-weight: 700; border: 1px solid #999; border-top: 0; border-bottom: 2px solid #217346; position: relative; }
.add { width: 82px; }
.tabs .dots { margin-left: auto; margin-right: 15px; }

/* status bar */
.status { display: flex; flex: none; align-items: center; height: 21px; background: #f1f1f1; font-size: 11px; }
.ready { padding-left: 7px; margin-right: auto; }
.v { width: 38px; height: 21px; }
.v.on { background: #c8c8c8; }
.zb { width: 15px; }
.zoom { appearance: none; width: 100px; height: 12px; background: linear-gradient(#999, #999) 0 5px / 100% 1px no-repeat, linear-gradient(#999, #999) 50% 3px / 1px 5px no-repeat; }
.zoom::-webkit-slider-thumb { appearance: none; width: 4px; height: 11px; background: #555; }
.pc { width: 45px; text-align: right; padding-right: 9px; }

/* taskbar */
.taskbar { display: flex; flex: none; height: 40px; color: #111; background: linear-gradient(90deg, #cde5ec, #d3e3ee 60%, #d6dbea); }
.start { width: 48px; }
.search { display: flex; align-items: center; gap: 12px; width: 344px; padding-left: 11px; background: #fff; border: 1px solid #c6c6c6; font-size: 14px; }
.search input { flex: 1; }
.search input::placeholder { color: #333; opacity: 1; }
.app { width: 40px; margin-right: 9px; }
.gap { margin-left: 7px; }
.run { border-bottom: 3px solid #0078d7; padding-top: 3px; }
.run + .run.act { margin-left: -4px; }
.act { width: 48px; background: #edf5f8; }
.tray { display: flex; margin-left: auto; align-items: stretch; margin-right: 3px; border-right: 1px solid #a5aab8; }
.t24 { width: 24px; }
.esp { width: 36px; }
.clock { width: 64px; display: flex; flex-direction: column; justify-content: center; text-align: center; line-height: 18px; font-size: 11px; }
.note { width: 49px; }
```
